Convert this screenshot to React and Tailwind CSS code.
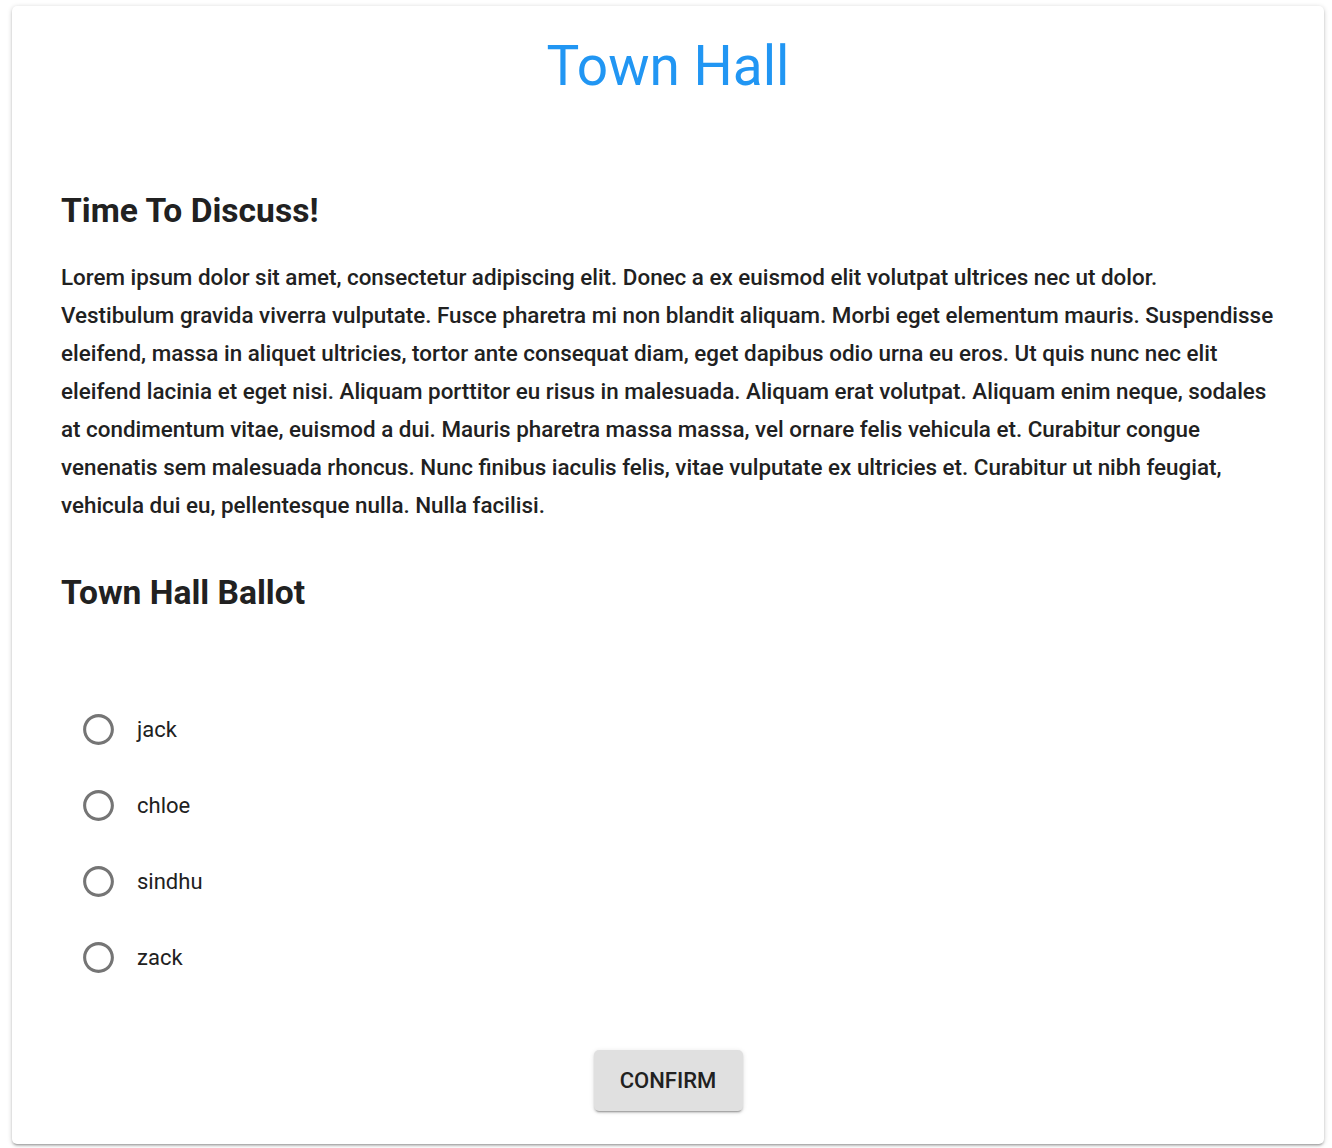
import React from 'react';

const CANDIDATES = ['jack', 'chloe', 'sindhu', 'zack'];

const LOREM =
  'Lorem ipsum dolor sit amet, consectetur adipiscing elit. Donec a ex euismod elit volutpat ultrices nec ut dolor. Vestibulum gravida viverra vulputate. Fusce pharetra mi non blandit aliquam. Morbi eget elementum mauris. Suspendisse eleifend, massa in aliquet ultricies, tortor ante consequat diam, eget dapibus odio urna eu eros. Ut quis nunc nec elit eleifend lacinia et eget nisi. Aliquam porttitor eu risus in malesuada. Aliquam erat volutpat. Aliquam enim neque, sodales at condimentum vitae, euismod a dui. Mauris pharetra massa massa, vel ornare felis vehicula et. Curabitur congue venenatis sem malesuada rhoncus. Nunc finibus iaculis felis, vitae vulputate ex ultricies et. Curabitur ut nibh feugiat, vehicula dui eu, pellentesque nulla. Nulla facilisi.';

// radio vazio, mesmo desenho do ícone do material
function RadioIcon() {
  return (
    <svg viewBox="0 0 24 24" className="w-[37px] h-[37px] fill-[#757575]">
      <path d="M12 2C6.48 2 2 6.48 2 12s4.48 10 10 10 10-4.48 10-10S17.52 2 12 2zm0 18c-4.42 0-8-3.58-8-8s3.58-8 8-8 8 3.58 8 8-3.58 8-8 8z" />
    </svg>
  );
}

export default function App() {
  return (
    <div className="min-h-[1148px] bg-white pt-[6px] pl-[12px] font-['Roboto','Liberation_Sans',sans-serif]">
      <div className="w-[1312px] bg-white rounded-[5px] shadow-[0_2px_2px_0_rgba(0,0,0,0.14),0_3px_1px_-2px_rgba(0,0,0,0.12),0_1px_5px_0_rgba(0,0,0,0.2)] pt-[27px] pb-[33px] px-[49px]">
        {/* TITULO */}
        <h1 className="text-center text-[55px] leading-[66px] font-normal text-[#2196f3]">
          Town Hall
        </h1>

        <h2 className="mt-[92px] text-[33.6px] leading-[40px] font-bold text-[#212121]">
          Time To Discuss!
        </h2>

        <p className="mt-[27px] text-[22.4px] leading-[38px] font-medium text-[#212121]">
          {LOREM}
        </p>

        <h2 className="mt-[49px] text-[33.6px] leading-[40px] font-bold text-[#212121]">
          Town Hall Ballot
        </h2>

        {/* OPCOES DA VOTACAO */}
        <div className="mt-[78px] flex flex-col">
          {CANDIDATES.map((name) => (
            <label key={name} className="h-[76px] flex items-center pl-[19px] cursor-pointer">
              <RadioIcon />
              <span className="ml-[20px] text-[22px] text-[#212121]">{name}</span>
            </label>
          ))}
        </div>

        <div className="mt-[55px] flex justify-center">
          <button className="w-[149px] h-[61px] rounded-[5px] bg-[#e0e0e0] text-[22px] font-medium uppercase text-[#212121] shadow-[0_3px_1px_-2px_rgba(0,0,0,0.2),0_2px_2px_0_rgba(0,0,0,0.14),0_1px_5px_0_rgba(0,0,0,0.12)]">
            Confirm
          </button>
        </div>
      </div>
    </div>
  );
}
